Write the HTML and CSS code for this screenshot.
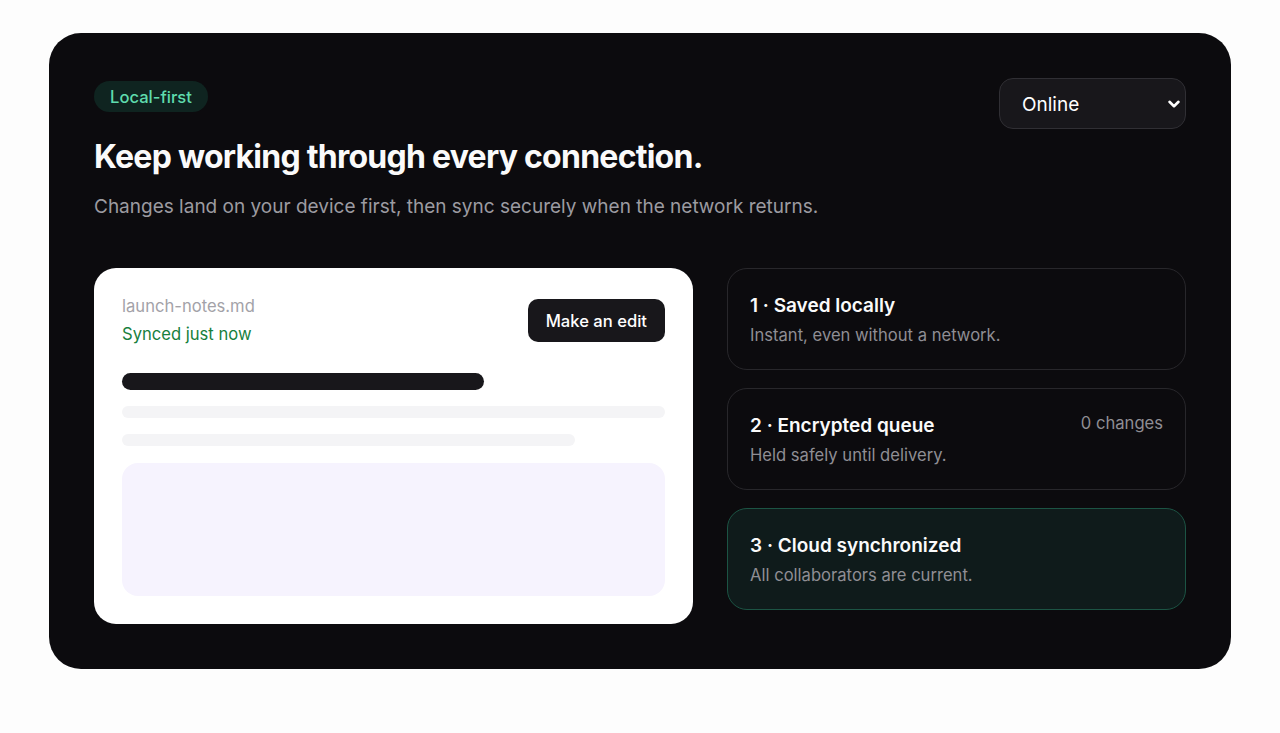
FILE: index.html
```html
<!DOCTYPE html>
<html lang="en">
<head>
<meta charset="utf-8">
<title>Local-first</title>
<link rel="stylesheet" href="styles.css">
</head>
<body>
<main class="panel">
  <header class="header">
    <div class="intro">
      <span class="badge">Local-first</span>
      <h1 class="title">Keep working through every connection.</h1>
      <p class="lede">Changes land on your device first, then sync securely when the network returns.</p>
    </div>
    <div class="select">
      <span>Online</span>
      <svg class="chev" width="14" height="14" viewBox="0 0 14 14" aria-hidden="true"><path d="M2.5 4.8 L7 9.2 L11.5 4.8" fill="none" stroke="#fff" stroke-width="2.6" stroke-linecap="round" stroke-linejoin="round"/></svg>
    </div>
  </header>
  <section class="grid">
    <div class="doc">
      <div class="doc-head">
        <div>
          <div class="file">launch-notes.md</div>
          <div class="status">Synced just now</div>
        </div>
        <button class="btn">Make an edit</button>
      </div>
      <div class="bar bar-dark"></div>
      <div class="bar bar-light"></div>
      <div class="bar bar-light bar-short"></div>
      <div class="box"></div>
    </div>
    <div class="steps">
      <div class="step">
        <div class="step-row"><div class="step-title">1 · Saved locally</div></div>
        <div class="step-sub">Instant, even without a network.</div>
      </div>
      <div class="step">
        <div class="step-row"><div class="step-title">2 · Encrypted queue</div><div class="count">0 changes</div></div>
        <div class="step-sub">Held safely until delivery.</div>
      </div>
      <div class="step step-active">
        <div class="step-row"><div class="step-title">3 · Cloud synchronized</div></div>
        <div class="step-sub">All collaborators are current.</div>
      </div>
    </div>
  </section>
</main>
</body>
</html>
```
FILE: styles.css
```css
* { box-sizing: border-box; }
html, body { margin: 0; }
body {
  background: #fdfdfd;
  font-family: Inter, "Noto Sans", sans-serif;
  padding: 33px 49px;
}
.panel {
  background: #0c0b0e;
  border-radius: 32px;
  padding: 45px 45px 45px 45px;
  height: 636px;
}
.header {
  display: flex;
  justify-content: space-between;
  align-items: flex-start;
}
.intro { padding-top: 3px; }
.badge {
  display: inline-block;
  background: #0f2420;
  color: #5fdcae;
  font-size: 16.6px;
  font-weight: 500;
  line-height: 22px;
  padding: 5px 16px 4px;
  border-radius: 999px;
}
.title {
  margin: 25px 0 0;
  color: #fafafa;
  font-size: 32px;
  line-height: 40px;
  font-weight: 700;
  letter-spacing: -0.75px;
}
.lede {
  margin: 16px 0 0;
  color: #9c9ba1;
  font-size: 19px;
  line-height: 28px;
}
.select {
  width: 187px;
  height: 51px;
  border-radius: 14px;
  background: #18171b;
  border: 1px solid #302f34;
  display: flex;
  align-items: center;
  justify-content: space-between;
  padding: 1px 4px 0 22px;
  color: #fff;
  font-size: 19px;
}
.grid {
  margin-top: 47px;
  display: grid;
  grid-template-columns: 599px 1fr;
  gap: 34px;
}
.doc {
  background: #fff;
  border-radius: 22px;
  padding: 28px 28px;
  height: 356px;
}
.doc-head {
  display: flex;
  justify-content: space-between;
  align-items: flex-start;
}
.file { color: #a3a2a8; font-size: 16.6px; line-height: 20px; margin-top: 0; }
.status { color: #17803d; font-size: 16.6px; line-height: 20px; margin-top: 8px; }
.btn {
  margin-top: 3px;
  background: #18171b;
  color: #fff;
  border: 0;
  border-radius: 10px;
  height: 43px;
  padding: 0 18px;
  font-family: inherit;
  font-size: 16.6px;
  font-weight: 500;
}
.bar { border-radius: 999px; }
.bar-dark { margin-top: 29px; height: 17px; width: 362px; background: #18171b; }
.bar-light { margin-top: 16px; height: 12px; background: #f4f4f6; }
.bar-short { width: 453px; }
.box { margin-top: 17px; height: 133px; border-radius: 16px; background: #f6f3fe; }
.steps {
  display: flex;
  flex-direction: column;
  gap: 18px;
}
.step {
  height: 102px;
  border: 1px solid #28272b;
  border-radius: 20px;
  padding: 24px 22px 0 22px;
}
.step-active { background: #0f1b1b; border-color: #1c5444; }
.step-row { display: flex; justify-content: space-between; align-items: flex-start; }
.step-title { color: #fafafa; font-size: 19px; font-weight: 600; line-height: 26px; }
.count { color: #8f8e94; font-size: 16.6px; line-height: 20px; }
.step-sub { color: #8f8e94; font-size: 16.6px; line-height: 20px; margin-top: 6px; }
```
